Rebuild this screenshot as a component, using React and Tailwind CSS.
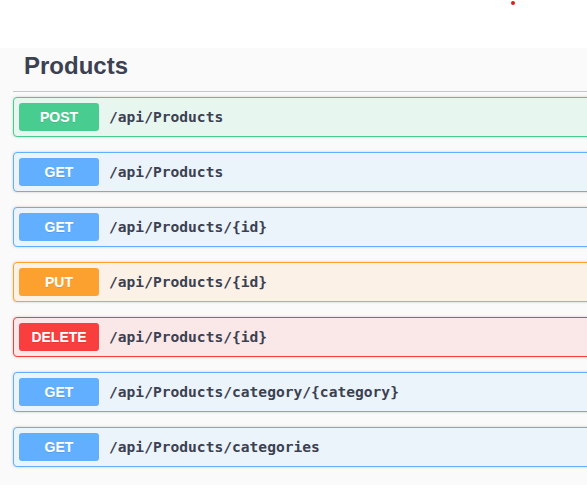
import React from "react";

const ops = [
  { method: "POST", path: "/api/Products", badge: "bg-[#49cc90]", box: "bg-[#e8f6f0] border-[#49cc90]" },
  { method: "GET", path: "/api/Products", badge: "bg-[#61affe]", box: "bg-[#ebf3fb] border-[#61affe]" },
  { method: "GET", path: "/api/Products/{id}", badge: "bg-[#61affe]", box: "bg-[#ebf3fb] border-[#61affe]" },
  { method: "PUT", path: "/api/Products/{id}", badge: "bg-[#fca130]", box: "bg-[#fbf1e6] border-[#fca130]" },
  { method: "DELETE", path: "/api/Products/{id}", badge: "bg-[#f93e3e]", box: "bg-[#fae7e7] border-[#f93e3e]" },
  { method: "GET", path: "/api/Products/category/{category}", badge: "bg-[#61affe]", box: "bg-[#ebf3fb] border-[#61affe]" },
  { method: "GET", path: "/api/Products/categories", badge: "bg-[#61affe]", box: "bg-[#ebf3fb] border-[#61affe]" },
];

export default function App() {
  return (
    <div className="relative w-[587px] h-[485px] overflow-hidden bg-white font-['Liberation_Sans',Arial,sans-serif]">
      {/* dot at top */}
      <div className="absolute left-[511px] top-[1px] w-[4px] h-[4px] rounded-full bg-[#e01b1b]" />

      <div className="h-[48px] bg-white" />

      <div className="bg-[#fafafa] h-[437px] pl-[13px]">
        <div className="w-[620px]">
          <h3 className="pt-[3px] pb-[11px] pl-[11px] text-[24px] leading-[29px] font-bold text-[#3b4151] border-b border-[#c4c6cb]">
            Products
          </h3>

          <div className="mt-[5px] flex flex-col gap-[15px]">
            {ops.map((op, i) => (
              <div
                key={i}
                className={`flex items-center h-[40px] px-[5px] border rounded-[4px] shadow-[0_0_3px_rgba(0,0,0,0.19)] ${op.box}`}
              >
                <span
                  className={`w-[80px] h-[28px] flex items-center justify-center rounded-[3px] text-white text-[14px] font-bold [text-shadow:0_1px_0_rgba(0,0,0,0.1)] ${op.badge}`}
                >
                  {op.method}
                </span>
                <span className="pl-[10px] font-['DejaVu_Sans_Mono',monospace] text-[14.6px] font-bold text-[#3b4151]">
                  {op.path}
                </span>
              </div>
            ))}
          </div>
        </div>
      </div>
    </div>
  );
}
